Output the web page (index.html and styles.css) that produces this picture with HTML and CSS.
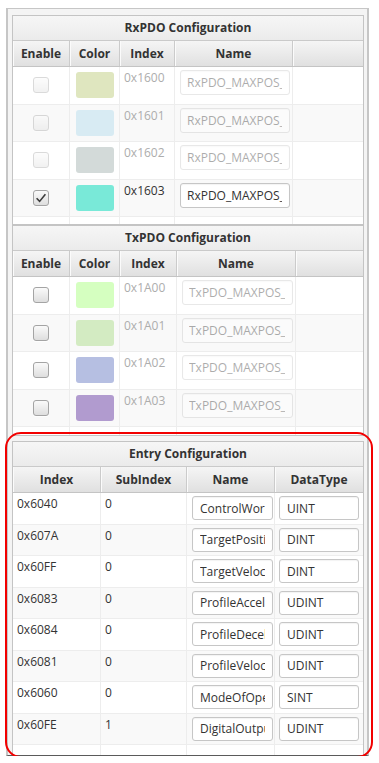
FILE: index.html
```html
<!DOCTYPE html>
<html lang="en">
<head>
    <meta charset="UTF-8">
    <meta name="viewport" content="width=device-width, initial-scale=1.0">
    <title>PDO Mapping</title>
    <link rel="stylesheet" href="styles.css">
</head>
<body>
    <div class="frame">
        <!-- RxPDO -->
        <section class="panel">
            <div class="panel-title">RxPDO Configuration</div>
            <div class="grid cols-rx head">
                <div class="th">Enable</div>
                <div class="th">Color</div>
                <div class="th">Index</div>
                <div class="th">Name</div>
                <div class="th"></div>
            </div>
            <div class="body body-rx">
                <div class="grid cols-rx row">
                    <div class="td td-center"><span class="check off"></span></div>
                    <div class="td td-center"><span class="swatch" style="background:#dfe6bf"></span></div>
                    <div class="td td-text muted">0x1600</div>
                    <div class="td"><input class="field field-rx" value="RxPDO_MAXPOS_1600" disabled></div>
                    <div class="td"></div>
                </div>
                <div class="grid cols-rx row">
                    <div class="td td-center"><span class="check off"></span></div>
                    <div class="td td-center"><span class="swatch" style="background:#d8ebf3"></span></div>
                    <div class="td td-text muted">0x1601</div>
                    <div class="td"><input class="field field-rx" value="RxPDO_MAXPOS_1601" disabled></div>
                    <div class="td"></div>
                </div>
                <div class="grid cols-rx row">
                    <div class="td td-center"><span class="check off"></span></div>
                    <div class="td td-center"><span class="swatch" style="background:#d3dad9"></span></div>
                    <div class="td td-text muted">0x1602</div>
                    <div class="td"><input class="field field-rx" value="RxPDO_MAXPOS_1602" disabled></div>
                    <div class="td"></div>
                </div>
                <div class="grid cols-rx row">
                    <div class="td td-center">
                        <span class="check">
                            <svg viewBox="0 0 14 14" width="14" height="14"><path d="M2.6 7.2 L5.6 10.4 L11.4 3.2"/></svg>
                        </span>
                    </div>
                    <div class="td td-center"><span class="swatch" style="background:#79e9d8"></span></div>
                    <div class="td td-text">0x1603</div>
                    <div class="td"><input class="field field-rx" value="RxPDO_MAXPOS_1603" readonly></div>
                    <div class="td"></div>
                </div>
                <div class="grid cols-rx row">
                    <div class="td"></div><div class="td"></div><div class="td"></div><div class="td"></div><div class="td"></div>
                </div>
            </div>
        </section>

        <!-- TxPDO -->
        <section class="panel">
            <div class="panel-title">TxPDO Configuration</div>
            <div class="grid cols-tx head">
                <div class="th">Enable</div>
                <div class="th">Color</div>
                <div class="th">Index</div>
                <div class="th">Name</div>
                <div class="th"></div>
            </div>
            <div class="body body-tx">
                <div class="grid cols-tx row">
                    <div class="td td-center"><span class="check"></span></div>
                    <div class="td td-center"><span class="swatch" style="background:#d5ffc0"></span></div>
                    <div class="td td-text muted">0x1A00</div>
                    <div class="td"><input class="field field-tx" value="TxPDO_MAXPOS_1A00" disabled></div>
                    <div class="td"></div>
                </div>
                <div class="grid cols-tx row">
                    <div class="td td-center"><span class="check"></span></div>
                    <div class="td td-center"><span class="swatch" style="background:#d3ebc2"></span></div>
                    <div class="td td-text muted">0x1A01</div>
                    <div class="td"><input class="field field-tx" value="TxPDO_MAXPOS_1A01" disabled></div>
                    <div class="td"></div>
                </div>
                <div class="grid cols-tx row">
                    <div class="td td-center"><span class="check"></span></div>
                    <div class="td td-center"><span class="swatch" style="background:#b6bfe2"></span></div>
                    <div class="td td-text muted">0x1A02</div>
                    <div class="td"><input class="field field-tx" value="TxPDO_MAXPOS_1A02" disabled></div>
                    <div class="td"></div>
                </div>
                <div class="grid cols-tx row">
                    <div class="td td-center"><span class="check"></span></div>
                    <div class="td td-center"><span class="swatch" style="background:#b19bcf"></span></div>
                    <div class="td td-text muted">0x1A03</div>
                    <div class="td"><input class="field field-tx" value="TxPDO_MAXPOS_1A03" disabled></div>
                    <div class="td"></div>
                </div>
                <div class="grid cols-tx row">
                    <div class="td"></div><div class="td"></div><div class="td"></div><div class="td"></div><div class="td"></div>
                </div>
            </div>
        </section>

        <!-- Entries -->
        <section class="panel panel-entry">
            <div class="panel-title">Entry Configuration</div>
            <div class="grid cols-entry head">
                <div class="th">Index</div>
                <div class="th">SubIndex</div>
                <div class="th">Name</div>
                <div class="th">DataType</div>
            </div>
            <div class="body">
                <div class="grid cols-entry row row-entry">
                    <div class="td td-text">0x6040</div>
                    <div class="td td-text">0</div>
                    <div class="td"><input class="field field-name" value="ControlWord" readonly></div>
                    <div class="td"><input class="field field-type" value="UINT" readonly></div>
                </div>
                <div class="grid cols-entry row row-entry">
                    <div class="td td-text">0x607A</div>
                    <div class="td td-text">0</div>
                    <div class="td"><input class="field field-name" value="TargetPosition" readonly></div>
                    <div class="td"><input class="field field-type" value="DINT" readonly></div>
                </div>
                <div class="grid cols-entry row row-entry">
                    <div class="td td-text">0x60FF</div>
                    <div class="td td-text">0</div>
                    <div class="td"><input class="field field-name" value="TargetVelocity" readonly></div>
                    <div class="td"><input class="field field-type" value="DINT" readonly></div>
                </div>
                <div class="grid cols-entry row row-entry">
                    <div class="td td-text">0x6083</div>
                    <div class="td td-text">0</div>
                    <div class="td"><input class="field field-name" value="ProfileAcceleration" readonly></div>
                    <div class="td"><input class="field field-type" value="UDINT" readonly></div>
                </div>
                <div class="grid cols-entry row row-entry">
                    <div class="td td-text">0x6084</div>
                    <div class="td td-text">0</div>
                    <div class="td"><input class="field field-name" value="ProfileDeceleration" readonly></div>
                    <div class="td"><input class="field field-type" value="UDINT" readonly></div>
                </div>
                <div class="grid cols-entry row row-entry">
                    <div class="td td-text">0x6081</div>
                    <div class="td td-text">0</div>
                    <div class="td"><input class="field field-name" value="ProfileVelocity" readonly></div>
                    <div class="td"><input class="field field-type" value="UDINT" readonly></div>
                </div>
                <div class="grid cols-entry row row-entry">
                    <div class="td td-text">0x6060</div>
                    <div class="td td-text">0</div>
                    <div class="td"><input class="field field-name" value="ModeOfOperation" readonly></div>
                    <div class="td"><input class="field field-type" value="SINT" readonly></div>
                </div>
                <div class="grid cols-entry row row-entry">
                    <div class="td td-text">0x60FE</div>
                    <div class="td td-text">1</div>
                    <div class="td"><input class="field field-name" value="DigitalOutputs" readonly></div>
                    <div class="td"><input class="field field-type" value="UDINT" readonly></div>
                </div>
                <div class="grid cols-entry row row-entry">
                    <div class="td"></div><div class="td"></div><div class="td"></div><div class="td"></div>
                </div>
            </div>
        </section>
    </div>

    <!-- red highlight drawn over the entry table -->
    <div class="callout"></div>
</body>
</html>
```

FILE: styles.css
```css
body {
    margin: 0;
    background-color: #fff;
    font-family: 'Open Sans', 'Noto Sans', sans-serif;
    font-size: 12px;
    color: #333;
    position: relative;
}

/* Outer scroll pane */
.frame {
    margin: 8px 0 0 6px;
    width: 363px;
    height: 748px;
    box-sizing: border-box;
    border-left: 2px solid #c6c6c6;
    border-right: 2px solid #c6c6c6;
    border-top: 1px solid #c6c6c6;
    border-bottom: 1px solid #5a5a5a;
    padding: 6px 3px 0 4px;
    background-color: #f4f4f4;
    overflow: hidden;
}

.panel {
    border: 1px solid #c4c4c4;
    background-color: #fff;
}

.panel-entry {
    margin-top: 5px;
}

.panel-title {
    height: 24px;
    line-height: 24px;
    text-align: center;
    font-weight: bold;
    background: linear-gradient(#f6f6f6, #ebebeb);
    border-bottom: 1px solid #cacaca;
}

/* Table grids */
.grid {
    display: grid;
}

.cols-rx {
    grid-template-columns: 57px 50px 55px 118px 70px;
}

.cols-tx {
    grid-template-columns: 57px 50px 57px 119px 67px;
}

.cols-entry {
    grid-template-columns: 88px 86px 88px 88px;
}

.head {
    height: 26px;
    box-sizing: border-box;
    border-bottom: 1px solid #c4c4c4;
    background: linear-gradient(#f5f5f5, #e0e0e0);
}

.th {
    font-weight: bold;
    text-align: center;
    line-height: 25px;
    border-right: 1px solid #cbcbcb;
    box-shadow: inset 1px 0 0 #fbfbfb;
}

.th:last-child {
    border-right: none;
}

.body-rx {
    height: 157px;
    overflow: hidden;
}

.body-tx {
    height: 158px;
    overflow: hidden;
}

.row {
    height: 37.5px;
    box-sizing: border-box;
    border-bottom: 1px solid #ededed;
    background-color: #fff;
}

.row:nth-child(even) {
    background-color: #f9f9f9;
}

.row-entry {
    height: 31.5px;
}

.td {
    min-width: 0;
    border-right: 1px solid #ededed;
}

.td:last-child {
    border-right: none;
}

.td-center {
    display: flex;
    align-items: center;
    justify-content: center;
}

.td-text {
    padding: 3px 0 0 4px;
    line-height: 16px;
}

.muted {
    color: #adadad;
}

/* Controls */
.check {
    width: 16px;
    height: 16px;
    box-sizing: border-box;
    border: 1px solid #a4a4a4;
    border-radius: 3px;
    background: linear-gradient(#fafafa, #dedede);
    box-shadow: 0 1px 0 rgba(255, 255, 255, 0.8);
}

.check svg {
    display: block;
}

.check path {
    fill: none;
    stroke: #3c3c3c;
    stroke-width: 1.6;
}

.check.off {
    opacity: 0.4;
}

.swatch {
    width: 38px;
    height: 26px;
    border-radius: 3px;
}

.field {
    display: block;
    box-sizing: border-box;
    margin: 3px 0 0 5px;
    height: 25px;
    padding: 0 7px 0 6px;
    border: 1px solid #c6c6c6;
    border-radius: 3px;
    background-color: #fff;
    box-shadow: inset 0 1px 1px rgba(0, 0, 0, 0.05);
    font: inherit;
    color: #333;
    outline: none;
}

.field:disabled {
    opacity: 0.4;
    color: #333;
    background-color: #fff;
}

.field-rx {
    width: 110px;
}

.field-tx {
    width: 111px;
}

.field-name {
    width: 81px;
    height: 24px;
    padding-left: 7px;
}

.field-type {
    width: 80px;
    height: 24px;
    margin-left: 4px;
    padding-left: 7px;
}

/* Annotation */
.callout {
    position: absolute;
    left: 5px;
    top: 432px;
    width: 368px;
    height: 326px;
    box-sizing: border-box;
    border: 2px solid #f20000;
    border-radius: 16px;
    pointer-events: none;
}
```
